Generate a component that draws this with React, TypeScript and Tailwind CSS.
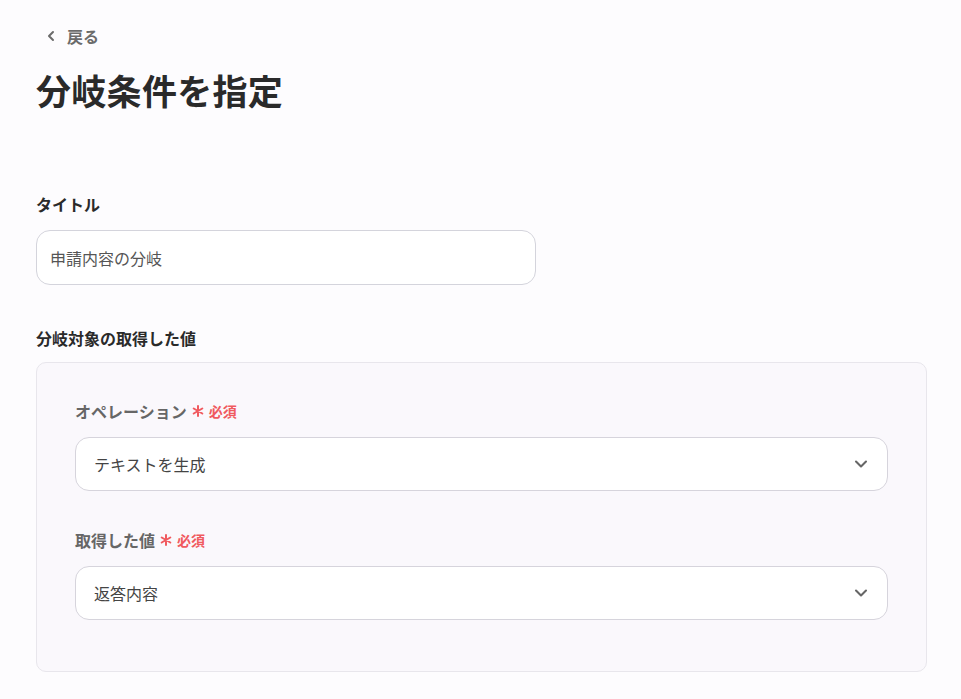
import { ChevronLeft, ChevronDown } from 'lucide-react'

const font = { fontFamily: '"Noto Sans CJK JP", "Noto Sans", sans-serif' }

function Required() {
  return (
    <span className="ml-[5px] inline-flex items-center text-[14px] font-bold text-[#f05a5f]">
      <svg className="mr-[5px] h-[12px] w-[12px]" viewBox="0 0 12 12" stroke="currentColor" strokeWidth={2} strokeLinecap="round">
        <path d="M6 1v10M1.7 3.5l8.6 5M1.7 8.5l8.6-5" />
      </svg>
      必須
    </span>
  )
}

function SelectBox({ value }: { value: string }) {
  return (
    <div className="flex h-[54px] items-center justify-between rounded-[14px] border border-[#d6d4dc] bg-white pl-[18px] pr-[16px]">
      <span className="text-[16px] text-[#444]">{value}</span>
      <ChevronDown className="h-5 w-5 text-[#666]" strokeWidth={2.5} />
    </div>
  )
}

export default function App() {
  return (
    <div className="min-h-screen bg-[#fdfcfe] text-[#2a2a2a]" style={font}>
      <div className="w-[961px] px-[36px] pt-[24px] pb-[28px]">

        {/* Back */}
        <div className="flex items-center gap-[8px] pl-[7px] text-[16px] font-bold text-[#6b6b6b]">
          <ChevronLeft className="h-4 w-4" strokeWidth={3} />
          <span>戻る</span>
        </div>

        {/* Heading */}
        <h1 className="mt-[18px] text-[35px] font-bold leading-[48px] tracking-[0.3px] text-[#2a2a2a]">分岐条件を指定</h1>

        {/* Title field */}
        <p className="mt-[78px] text-[16px] font-bold leading-[24px]">タイトル</p>
        <div className="mt-[14px] flex h-[55px] w-[500px] items-center rounded-[14px] border border-[#d4d4dc] bg-white px-[13px]">
          <span className="text-[16px] text-[#555]">申請内容の分岐</span>
        </div>

        {/* Branch target */}
        <p className="mt-[41px] text-[16px] font-bold leading-[24px]">分岐対象の取得した値</p>
        <div className="mt-[12px] w-[891px] rounded-[10px] border border-[#e8e6ec] bg-[#faf8fc] px-[38px] pt-[36px] pb-[51px]">
          <div className="flex items-center text-[16px] font-bold leading-[24px] text-[#666]">
            オペレーション<Required />
          </div>
          <div className="mt-[14px]">
            <SelectBox value="テキストを生成" />
          </div>

          <div className="mt-[37px] flex items-center text-[16px] font-bold leading-[24px] text-[#666]">
            取得した値<Required />
          </div>
          <div className="mt-[14px]">
            <SelectBox value="返答内容" />
          </div>
        </div>
      </div>
    </div>
  )
}
